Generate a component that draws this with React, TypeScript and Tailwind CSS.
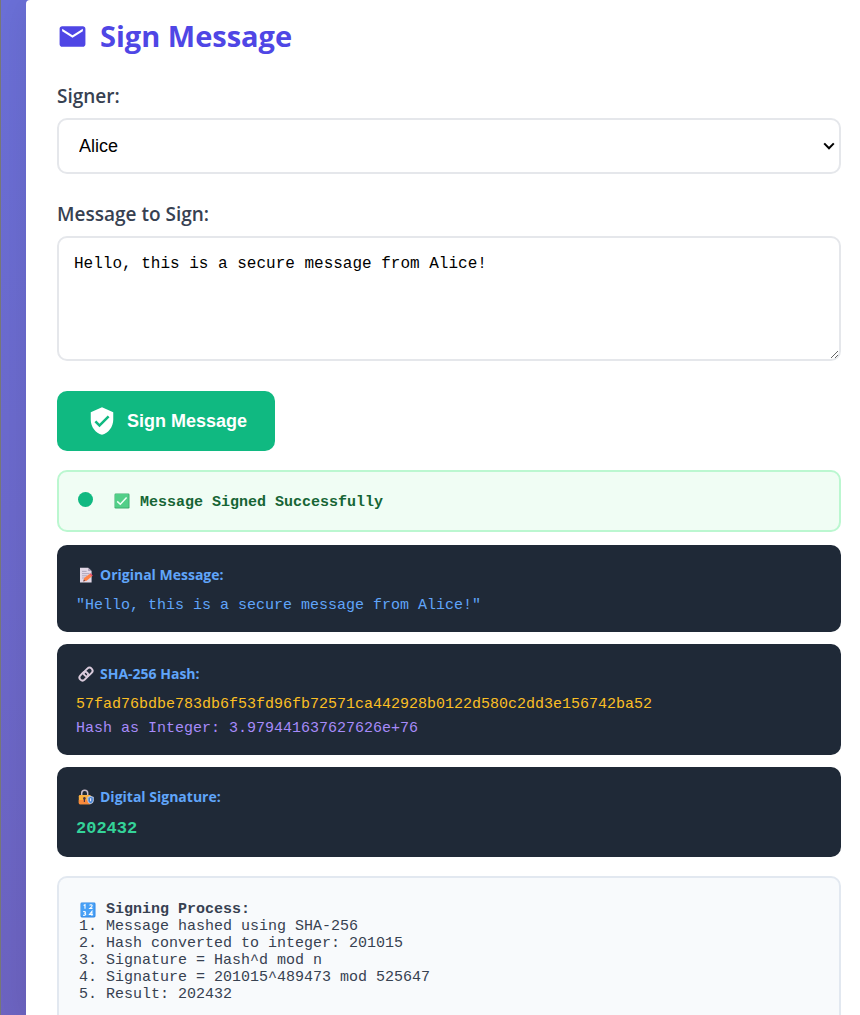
import type { ReactNode } from "react";
import { MdEmail, MdVerifiedUser } from "react-icons/md";

const MESSAGE = "Hello, this is a secure message from Alice!";

const STEPS = [
  "1. Message hashed using SHA-256",
  "2. Hash converted to integer: 201015",
  "3. Signature = Hash^d mod n",
  "4. Signature = 201015^489473 mod 525647",
  "5. Result: 202432",
];

function CheckIcon() {
  return (
    <svg viewBox="0 0 16 16" className="size-4 shrink-0" aria-hidden="true">
      <rect x="0.5" y="0.5" width="15" height="15" rx="1.2" fill="#3fae6e" />
      <rect x="1" y="1" width="13.6" height="13.6" rx="1" fill="#52cf88" />
      <path d="M3.2 8.4 6.3 11.3 12.6 4.6" fill="none" stroke="#f0fff6" strokeWidth="1.5" />
    </svg>
  );
}

function MemoIcon() {
  return (
    <svg viewBox="0 0 16 16" className="size-4 shrink-0" aria-hidden="true">
      <path d="M2 .7h8.2L13.6 4v11.6H2z" fill="#e2d8e6" />
      <path d="M10.2.7 13.6 4h-3.4z" fill="#a99bb4" />
      <path d="M4 4.4h4.6M4 6.6h7.4M4 8.8h5M4 11h3" stroke="#aaa0b5" strokeWidth=".9" />
      <path d="m5.3 14.4.9-3.3 5.2-4 2.4 2.4-5.2 4.2z" fill="#ff8246" />
      <path d="m11.4 7.1 1.2-.9 2.2 2.2-1 1.1z" fill="#ef4b62" />
      <path d="m5.3 14.4.5-2 1.6 1.3z" fill="#5c4250" />
    </svg>
  );
}

function LinkIcon() {
  return (
    <svg viewBox="0 0 16 16" className="size-4 shrink-0" aria-hidden="true">
      <g fill="none" stroke="#d9cadb" strokeWidth="2">
        <rect x="5.4" y="3" width="9.6" height="6" rx="3" transform="rotate(-45 10.2 6)" />
        <rect x="1" y="7.2" width="9.6" height="6" rx="3" transform="rotate(-45 5.8 10.2)" />
      </g>
    </svg>
  );
}

function LockIcon() {
  return (
    <svg viewBox="0 0 16 16" className="size-4 shrink-0" aria-hidden="true">
      <path d="M3.7 7V4.2a3 3 0 0 1 6 0V7" fill="none" stroke="#c9bccb" strokeWidth="1.5" />
      <rect x="0.8" y="6" width="12" height="9.2" rx="1.2" fill="#fbb040" />
      <path d="M.8 11h12v3a1.2 1.2 0 0 1-1.2 1.2H2A1.2 1.2 0 0 1 .8 14z" fill="#f98a3c" />
      <circle cx="6.4" cy="9.4" r="1.3" fill="#4b3342" />
      <path d="M5.8 9.6H7v3.4H5.8z" fill="#4b3342" />
      <path d="m12.6 6.8 3.2 1.1v3.4c0 2-1.3 3.3-3.2 4-1.9-.7-3.2-2-3.2-4V7.9z" fill="#b9c6e0" />
      <path d="m12.6 7.9 2.2.8v2.6c0 1.5-.8 2.3-2.2 2.9-1.4-.6-2.2-1.4-2.2-2.9V8.7z" fill="#4285d8" />
      <path d="M12.6 9.2v3" stroke="#e9dcef" strokeWidth="1.2" />
    </svg>
  );
}

function NumbersIcon() {
  return (
    <svg viewBox="0 0 16 16" className="size-4 shrink-0" aria-hidden="true">
      <rect x="0.5" y="0.5" width="15" height="15" rx="1.4" fill="#2f86e4" />
      <rect x="1" y="1" width="13.6" height="13.6" rx="1" fill="#48a0f6" />
      <g fill="none" stroke="#fff" strokeWidth="1.1">
        <path d="m3.6 3.4 1.4-.8v4.2M9.6 3.4c.6-1 2.8-.8 2.5.6-.2.9-1.4 1.5-2.3 2.4h2.7" />
        <path d="M3.2 9.6c2.8-.6 2.8 1.6 1 1.7 2.2 0 2.2 2.4-1.1 2M11.9 13.8V9.3l-2.4 3.2h3.4" />
      </g>
    </svg>
  );
}

function ResultCard({ icon, title, children }: { icon: ReactNode; title: string; children: ReactNode }) {
  return (
    <section className="rounded-[10px] bg-[#1f2937] px-[19px] pt-[18px] pb-[14px]">
      <h3 className="mb-[6px] flex items-center gap-[6px] pl-[2px] font-['Open_Sans','Noto_Sans',sans-serif] text-[14px] leading-6 font-bold text-[#60a5fa]">
        {icon}
        {title}
      </h3>
      <div className="break-all">{children}</div>
    </section>
  );
}

export default function App() {
  return (
    <div className="min-h-screen overflow-hidden border-l border-[#777777] bg-linear-to-b from-[#6b70d8] to-[#6d64c2] pl-[25px]">
      <main className="min-h-screen rounded-tl-sm bg-white pr-[19px] pl-[31px] font-['Liberation_Mono',monospace] text-[15px] shadow-[0_0_40px_rgba(0,0,0,0.1)]">
        <h2 className="flex items-center gap-3 pt-4 font-['Open_Sans','Noto_Sans',sans-serif] text-[29px] leading-10 font-bold text-[#4f46e5]">
          <MdEmail className="size-[31px]" aria-hidden="true" />
          Sign Message
        </h2>

        <label
          htmlFor="signer"
          className="mt-[26px] mb-2 block font-['Open_Sans','Noto_Sans',sans-serif] text-[19px] leading-7 font-semibold text-[#374151]"
        >
          Signer:
        </label>
        <div className="relative">
          <select
            id="signer"
            defaultValue="Alice"
            className="block h-14 w-full appearance-none rounded-[10px] border-2 border-[#e5e7eb] bg-white px-5 font-['Liberation_Sans',sans-serif] text-[18px] text-black"
          >
            <option>Alice</option>
            <option>Bob</option>
          </select>
          <svg
            viewBox="0 0 12 8"
            className="pointer-events-none absolute top-6 right-[6px] h-2 w-3"
            aria-hidden="true"
          >
            <path d="m1.2 1.4 4.8 4.9 4.8-4.9" fill="none" stroke="#000" strokeWidth="2" />
          </svg>
        </div>

        <label
          htmlFor="message"
          className="mt-[26px] mb-2 block font-['Open_Sans','Noto_Sans',sans-serif] text-[19px] leading-7 font-semibold text-[#374151]"
        >
          Message to Sign:
        </label>
        <textarea
          id="message"
          defaultValue={MESSAGE}
          className="block h-[125px] w-full rounded-[10px] border-2 border-[#e5e7eb] bg-white px-[15px] py-[14px] text-[16px] leading-6 text-black"
        />

        <button
          type="button"
          className="mt-[30px] flex h-[60px] items-center gap-[10px] rounded-[10px] bg-[#10b981] pr-7 pl-[30px] font-['Liberation_Sans',sans-serif] text-[18px] font-bold text-white"
        >
          <MdVerifiedUser className="size-[30px]" aria-hidden="true" />
          Sign Message
        </button>

        <div
          role="status"
          className="mt-[19px] flex h-[62px] items-center rounded-[10px] border-2 border-[#bbf7d0] bg-[#f0fdf4] px-[19px] font-bold text-[#166534]"
        >
          <span className="mb-1 size-[15px] rounded-full bg-[#10b981]" />
          <span className="ml-[21px] flex items-start gap-[10px] pt-1 leading-5">
            <CheckIcon />
            Message Signed Successfully
          </span>
        </div>

        <div className="mt-[13px] flex flex-col gap-3">
          <ResultCard icon={<MemoIcon />} title="Original Message:">
            <p className="leading-[25px] text-[#60a5fa]">&quot;{MESSAGE}&quot;</p>
          </ResultCard>
          <ResultCard icon={<LinkIcon />} title="SHA-256 Hash:">
            <p className="leading-[25px] text-[#fbbf24]">
              57fad76bdbe783db6f53fd96fb72571ca442928b0122d580c2dd3e156742ba52
            </p>
            <p className="leading-6 text-[#a78bfa]">Hash as Integer: 3.979441637627626e+76</p>
          </ResultCard>
          <ResultCard icon={<LockIcon />} title="Digital Signature:">
            <p className="text-[17px] leading-7 font-bold text-[#34d399]">202432</p>
          </ResultCard>
        </div>

        <section className="mt-[19px] rounded-t-[10px] border-2 border-b-0 border-[#e2e8f0] bg-[#f8fafc] px-5 pt-[23px] pb-6 leading-[17px] text-[#374151]">
          <h3 className="flex items-center gap-[10px] pl-px font-bold">
            <NumbersIcon />
            Signing Process:
          </h3>
          {STEPS.map((step) => (
            <p key={step}>{step}</p>
          ))}
        </section>
      </main>
    </div>
  );
}
